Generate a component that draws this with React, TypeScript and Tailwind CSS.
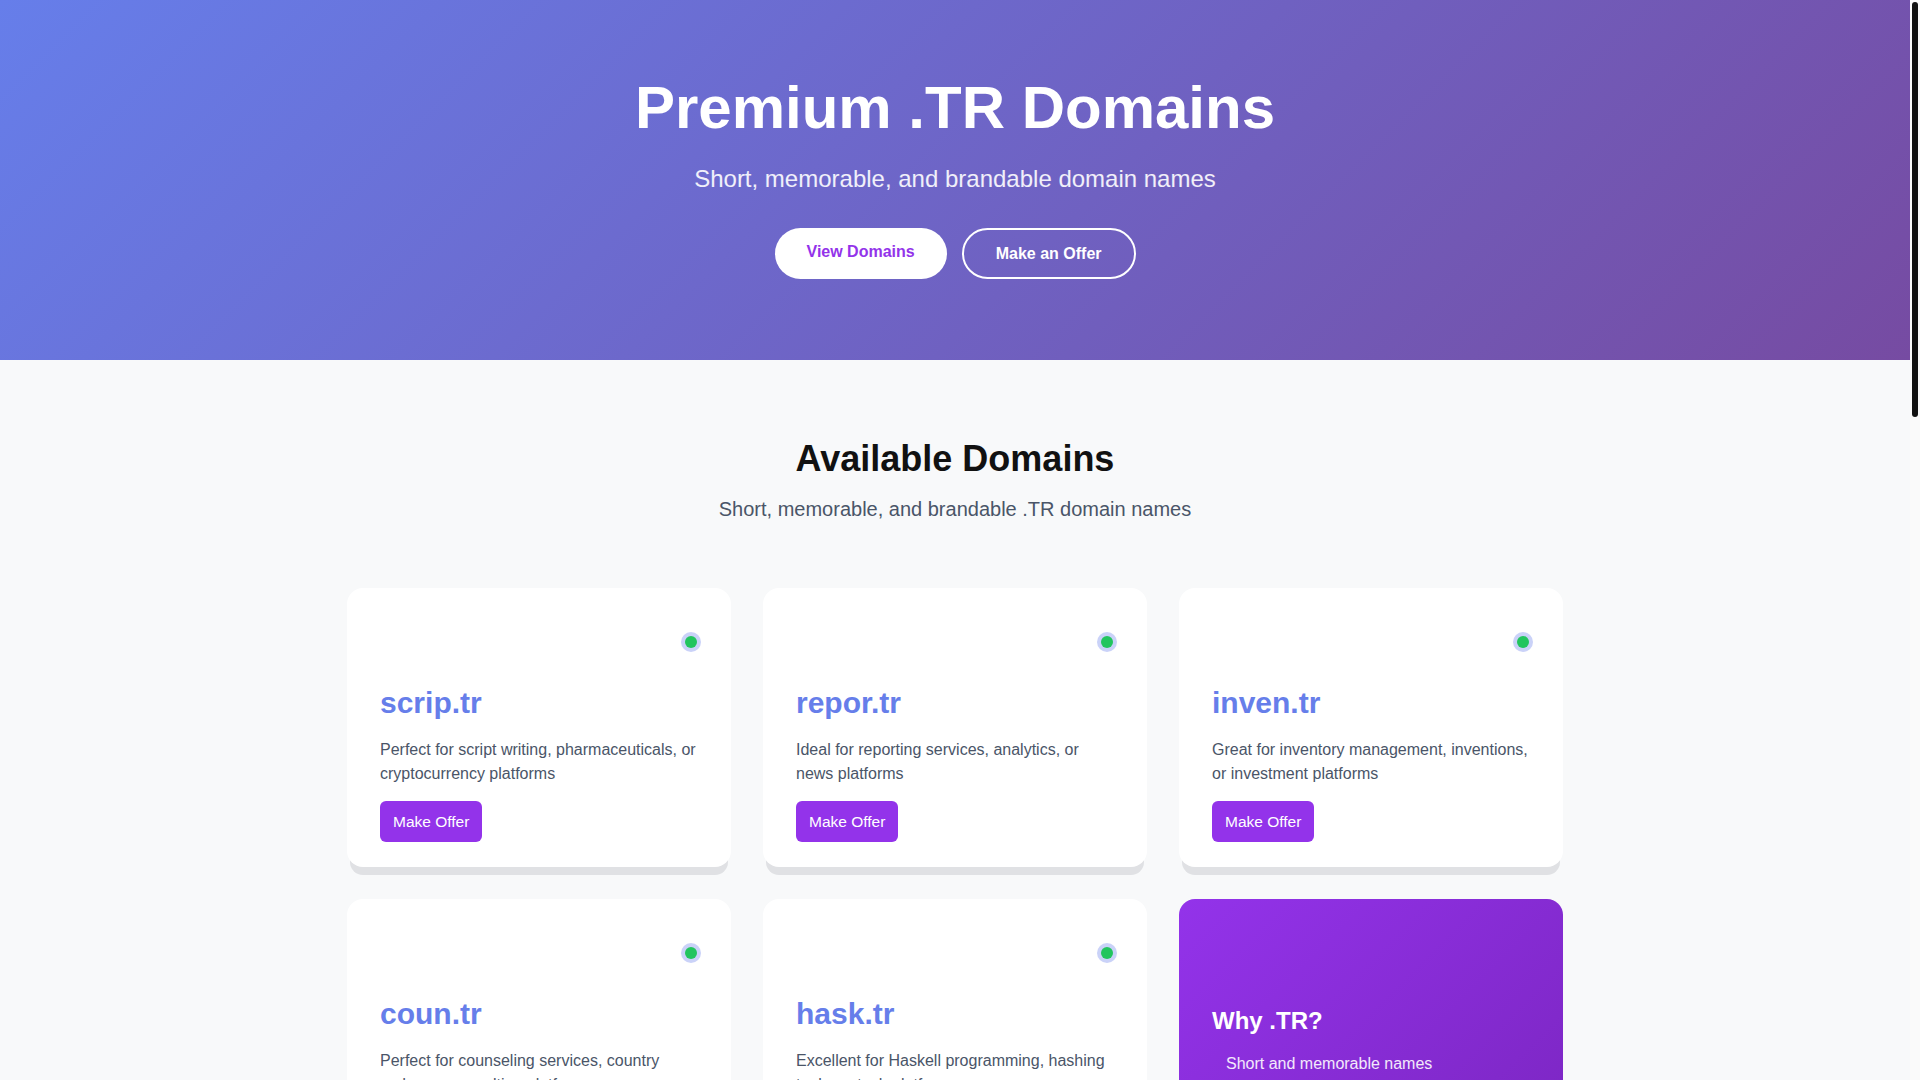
import React from 'react';

type Domain = {
  name: string;
  description: string;
};

const domains: Domain[] = [
  { name: 'scrip.tr', description: 'Perfect for script writing, pharmaceuticals, or cryptocurrency platforms' },
  { name: 'repor.tr', description: 'Ideal for reporting services, analytics, or news platforms' },
  { name: 'inven.tr', description: 'Great for inventory management, inventions, or investment platforms' },
  { name: 'coun.tr', description: 'Perfect for counseling services, country codes, or consulting platforms' },
  { name: 'hask.tr', description: 'Excellent for Haskell programming, hashing tools, or tech platforms' },
];

const moreDomains: Domain[] = [
  { name: 'trad.tr', description: 'Built for trading desks, traditions, or trade show platforms' },
  { name: 'medi.tr', description: 'Suited to media agencies, medical services, or meditation apps' },
  { name: 'lojis.tr', description: 'Made for logistics, shipping, or supply chain platforms' },
];

function DomainCard({ domain }: { domain: Domain }) {
  return (
    <div className="bg-white rounded-2xl pt-8 pl-[33px] pr-8 pb-[25px] shadow-[0_11px_0_-3px_#e0e1e4]">
      <div className="h-[44px] flex items-center justify-end">
        <span className="w-3 h-3 mr-[2px] rounded-full bg-[#22c55e] shadow-[0_0_0_4px_rgba(102,126,234,0.35)]" />
      </div>
      <h3 className="mt-[21px] text-[30px] leading-9 font-bold text-[#667eea]">{domain.name}</h3>
      <p className="mt-[17px] text-base leading-6 text-[#4a5568]">{domain.description}</p>
      <button className="mt-[15px] h-[41px] px-[13px] rounded-md bg-[#9333ea] text-white text-[15.5px] leading-6">
        Make Offer
      </button>
    </div>
  );
}

export default function App() {
  return (
    <div className="h-screen flex bg-[#f8f9fa] [font-family:'Liberation_Sans',Arial,sans-serif]">
      <div className="flex-1 min-w-0 overflow-y-auto [scrollbar-width:none]">
        {/* Hero */}
        <header className="h-[360px] bg-[linear-gradient(135deg,#667eea_0%,#764ba2_100%)] text-white text-center pt-[72px]">
          <h1 className="text-[60px] leading-[72px] font-bold">Premium .TR Domains</h1>
          <p className="mt-[19px] text-2xl leading-8 text-white/90">Short, memorable, and brandable domain names</p>
          <div className="mt-[33px] flex items-center justify-center gap-[15px]">
            <a className="h-[51px] px-8 pt-3 pb-[15px] rounded-full bg-white text-[#9333ea] text-base leading-6 font-bold">
              View Domains
            </a>
            <button className="h-[51px] px-8 py-[11.5px] rounded-full border-2 border-white text-white text-base leading-6 font-bold">
              Make an Offer
            </button>
          </div>
        </header>

        {/* Domains */}
        <section className="max-w-7xl mx-auto px-8 pt-[79px] pb-24">
          <div className="text-center mb-[65px]">
            <h2 className="text-4xl leading-10 font-bold text-[#111111]">Available Domains</h2>
            <p className="mt-4 text-xl leading-7 text-[#4a5568]">Short, memorable, and brandable .TR domain names</p>
          </div>

          <div className="grid grid-cols-3 gap-8">
            {domains.map((d) => (
              <DomainCard key={d.name} domain={d} />
            ))}

            <div className="rounded-2xl bg-[linear-gradient(135deg,#9333ea_0%,#7a25bf_100%)] pt-[106px] pl-[33px] pr-8 pb-8 text-white">
              <h3 className="text-2xl leading-8 font-bold">Why .TR?</h3>
              <ul className="mt-[15px] pl-[14px] text-base leading-6 text-white/90 space-y-2">
                <li>Short and memorable names</li>
                <li>Trusted country-code extension</li>
                <li>Ideal for the Turkish market</li>
                <li>Instant transfer after purchase</li>
              </ul>
            </div>

            {moreDomains.map((d) => (
              <DomainCard key={d.name} domain={d} />
            ))}
          </div>
        </section>

        {/* Offer */}
        <section className="bg-white py-24">
          <div className="max-w-2xl mx-auto px-8 text-center">
            <h2 className="text-4xl leading-10 font-bold text-[#111111]">Make an Offer</h2>
            <p className="mt-4 text-xl leading-7 text-[#4a5568]">Interested in one of our domains? Send us your offer.</p>
            <form className="mt-12 flex flex-col gap-4 text-left">
              <input className="h-12 px-4 rounded-lg border border-gray-300 text-base" placeholder="Your name" />
              <input className="h-12 px-4 rounded-lg border border-gray-300 text-base" placeholder="Email address" />
              <select className="h-12 px-4 rounded-lg border border-gray-300 text-base text-gray-500">
                <option>Select a domain</option>
              </select>
              <input className="h-12 px-4 rounded-lg border border-gray-300 text-base" placeholder="Offer amount (USD)" />
              <textarea className="h-36 px-4 py-3 rounded-lg border border-gray-300 text-base" placeholder="Message" />
              <button type="button" className="h-12 rounded-full bg-[linear-gradient(135deg,#667eea_0%,#764ba2_100%)] text-white font-bold">
                Send Offer
              </button>
            </form>
          </div>
        </section>

        <footer className="bg-[#1a1a2e] text-white/70 text-center py-12 text-sm">
          © 2024 Premium .TR Domains. All rights reserved.
        </footer>
      </div>

      {/* Scrollbar track */}
      <div className="w-[10px] shrink-0 bg-[#fafafa] pt-[2px] px-[2px]">
        <div className="h-[415px] rounded-full bg-[#111111]" />
      </div>
    </div>
  );
}
